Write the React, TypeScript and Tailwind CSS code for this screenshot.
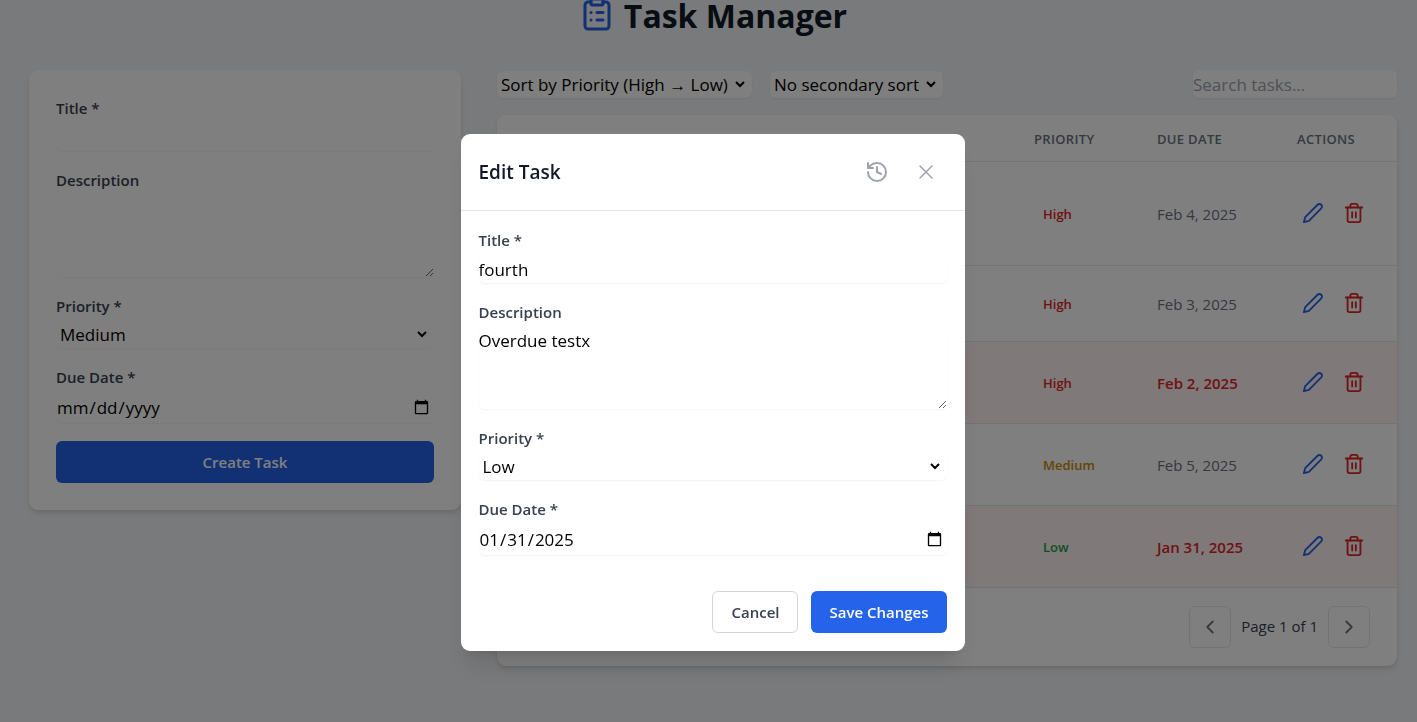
import React from "react";
import { ChevronLeft, ChevronRight, ClipboardList, History, X } from "lucide-react";

const stroke = {
  fill: "none",
  stroke: "currentColor",
  strokeWidth: 2,
  strokeLinecap: "round" as const,
  strokeLinejoin: "round" as const,
  viewBox: "0 0 24 24",
};

function PencilIcon() {
  return (
    <svg {...stroke} className="size-[22px]" aria-hidden="true">
      <path d="M17 3a2.828 2.828 0 1 1 4 4L7.5 20.5 2 22l1.5-5.5L17 3z" />
    </svg>
  );
}

function TrashIcon() {
  return (
    <svg {...stroke} className="size-[22px]" aria-hidden="true">
      <path d="M3 6h18" />
      <path d="M19 6v14a2 2 0 0 1-2 2H7a2 2 0 0 1-2-2V6" />
      <path d="M8 6V4a2 2 0 0 1 2-2h4a2 2 0 0 1 2 2v2" />
      <path d="M10 11v6M14 11v6" />
    </svg>
  );
}

const label = "block text-[15px] leading-[22px] font-semibold text-[#374151]";
const control =
  "block w-full rounded-md bg-white text-[17px] leading-[27px] text-black shadow-[0_1px_2px_0_rgb(0_0_0/0.05)]";
const sortSelect =
  "h-[27px] rounded-md border-r-4 border-transparent bg-white pr-1 text-[17px] text-black shadow-[0_1px_2px_0_rgb(0_0_0/0.05)]";

interface FormValues {
  title: string;
  description: string;
  priority: string;
  due: string;
}

function TaskFields({ prefix, values }: { prefix: string; values: FormValues }) {
  return (
    <div className="flex flex-col gap-[18px]">
      <div>
        <label htmlFor={`${prefix}-title`} className={label}>Title *</label>
        <input id={`${prefix}-title`} type="text" defaultValue={values.title} className={`${control} mt-1 h-7`} />
      </div>
      <div>
        <label htmlFor={`${prefix}-description`} className={label}>Description</label>
        <textarea
          id={`${prefix}-description`}
          rows={3}
          defaultValue={values.description}
          className={`${control} mt-1 h-[82px] resize-y`}
        />
      </div>
      <div>
        <label htmlFor={`${prefix}-priority`} className={label}>Priority *</label>
        <select
          id={`${prefix}-priority`}
          defaultValue={values.priority}
          className={`${control} mt-1 h-[27px] border-r-4 border-transparent`}
        >
          <option>High</option>
          <option>Medium</option>
          <option>Low</option>
        </select>
      </div>
      <div>
        <label htmlFor={`${prefix}-due`} className={label}>Due Date *</label>
        <input id={`${prefix}-due`} type="date" defaultValue={values.due} className={`${control} mt-1 h-[31px] pr-[2px]`} />
      </div>
    </div>
  );
}

interface Task {
  priority: "High" | "Medium" | "Low";
  due: string;
  overdue: boolean;
  height: string;
}

const tasks: Task[] = [
  { priority: "High", due: "Feb 4, 2025", overdue: false, height: "h-[104px]" },
  { priority: "High", due: "Feb 3, 2025", overdue: false, height: "h-[76px]" },
  { priority: "High", due: "Feb 2, 2025", overdue: true, height: "h-[82px]" },
  { priority: "Medium", due: "Feb 5, 2025", overdue: false, height: "h-[82px]" },
  { priority: "Low", due: "Jan 31, 2025", overdue: true, height: "h-[82px]" },
];

const priorityColor = {
  High: "text-[#dc2626]",
  Medium: "text-[#ca8a04]",
  Low: "text-[#16a34a]",
};

function TaskTable() {
  const head = "pt-[3px] pl-[18px] text-left text-[13px] font-semibold tracking-wide text-[#6b7280] uppercase";
  const pager =
    "flex size-[42px] items-center justify-center rounded-md border border-[#e5e7eb] text-[#6b7280]";
  return (
    <div className="overflow-hidden rounded-[9px] bg-white shadow-md">
      <table className="w-full table-fixed border-collapse">
        <thead>
          <tr className="h-[46px] border-b border-[#e5e7eb]">
            <td />
            <th scope="col" className={`${head} w-[123px]`}>Priority</th>
            <th scope="col" className={`${head} w-[140px]`}>Due Date</th>
            <th scope="col" className={`${head} w-[118px]`}>Actions</th>
          </tr>
        </thead>
        <tbody>
          {tasks.map((task) => (
            <tr
              key={task.due}
              className={`${task.height} border-b border-[#e5e7eb] ${task.overdue ? "bg-[#fef2f2]" : ""}`}
            >
              <td />
              <td className={`pt-[3px] pl-[27px] text-[13px] font-semibold ${priorityColor[task.priority]}`}>
                {task.priority}
              </td>
              <td
                className={`pt-[2px] pl-[18px] text-[15px] whitespace-nowrap ${
                  task.overdue ? "font-semibold text-[#dc2626]" : "text-[#6b7280]"
                }`}
              >
                {task.due}
              </td>
              <td className="pl-[23px]">
                <div className="flex items-center gap-[19px]">
                  <button type="button" aria-label={`Edit task due ${task.due}`} className="text-[#2563eb]">
                    <PencilIcon />
                  </button>
                  <button type="button" aria-label={`Delete task due ${task.due}`} className="text-[#dc2626]">
                    <TrashIcon />
                  </button>
                </div>
              </td>
            </tr>
          ))}
        </tbody>
      </table>
      <div className="flex items-center justify-end gap-[10px] px-[27px] py-[18px]">
        <button type="button" aria-label="Previous page" className={pager}>
          <ChevronLeft className="size-[22px]" />
        </button>
        <span className="text-[15px] text-[#374151]">Page 1 of 1</span>
        <button type="button" aria-label="Next page" className={pager}>
          <ChevronRight className="size-[22px]" />
        </button>
      </div>
    </div>
  );
}

function EditDialog() {
  return (
    <div className="fixed inset-0 flex items-center justify-center bg-black/50 pt-[63px] pl-2">
      <div
        role="dialog"
        aria-modal="true"
        aria-labelledby="edit-heading"
        className="w-[504px] max-w-full rounded-[9px] bg-white shadow-xl"
      >
        <div className="flex h-[77px] items-center justify-between border-b border-[#e5e7eb] px-[18px]">
          <h2 id="edit-heading" className="text-[19px] font-semibold text-[#111827]">Edit Task</h2>
          <div className="flex items-center gap-2 text-[#9ca3af]">
            <button type="button" aria-label="History" className="p-2">
              <History className="size-6" />
            </button>
            <button type="button" aria-label="Close" className="p-[9px]">
              <X className="size-6" strokeWidth={1.5} />
            </button>
          </div>
        </div>
        <form className="p-[18px]">
          <TaskFields
            prefix="edit"
            values={{ title: "fourth", description: "Overdue testx", priority: "Low", due: "2025-01-31" }}
          />
          <div className="mt-9 flex justify-end gap-[13px]">
            <button
              type="button"
              className="h-[42px] rounded-md border border-[#d1d5db] px-[18px] text-[15px] font-semibold text-[#374151]"
            >
              Cancel
            </button>
            <button
              type="button"
              className="h-[42px] rounded-md bg-[#2563eb] px-[18px] text-[15px] font-semibold text-white"
            >
              Save Changes
            </button>
          </div>
        </form>
      </div>
    </div>
  );
}

export default function App() {
  return (
    <div className="min-h-screen bg-[#f3f4f6] pr-5 pl-[29px] font-['Open_Sans','Noto_Sans',sans-serif]">
      <header className="flex h-[70px] items-start justify-center gap-[9px]">
        <ClipboardList className="-mt-1 size-9 text-[#2563eb]" />
        <h1 className="text-[32px] leading-8 font-bold text-[#111827]">Task Manager</h1>
      </header>
      <main className="flex items-start gap-9">
        <form className="w-[432px] shrink-0 rounded-[9px] bg-white p-[27px] shadow-md">
          <TaskFields prefix="create" values={{ title: "", description: "", priority: "Medium", due: "" }} />
          <button
            type="button"
            className="mt-[18px] h-[42px] w-full rounded-md bg-[#2563eb] text-[15px] font-semibold text-white"
          >
            Create Task
          </button>
        </form>
        <section className="flex min-w-0 flex-1 flex-col gap-[17px]">
          <div className="flex items-center justify-between">
            <div className="flex gap-[18px]">
              <select aria-label="Primary sort" className={sortSelect}>
                <option>Sort by Priority (High → Low)</option>
              </select>
              <select aria-label="Secondary sort" className={sortSelect}>
                <option>No secondary sort</option>
              </select>
            </div>
            <input
              type="search"
              aria-label="Search tasks"
              placeholder="Search tasks..."
              className="h-7 w-[204px] rounded-md bg-white text-[17px] shadow-[0_1px_2px_0_rgb(0_0_0/0.05)] placeholder:text-[#9ca3af]"
            />
          </div>
          <TaskTable />
        </section>
      </main>
      <EditDialog />
    </div>
  );
}
